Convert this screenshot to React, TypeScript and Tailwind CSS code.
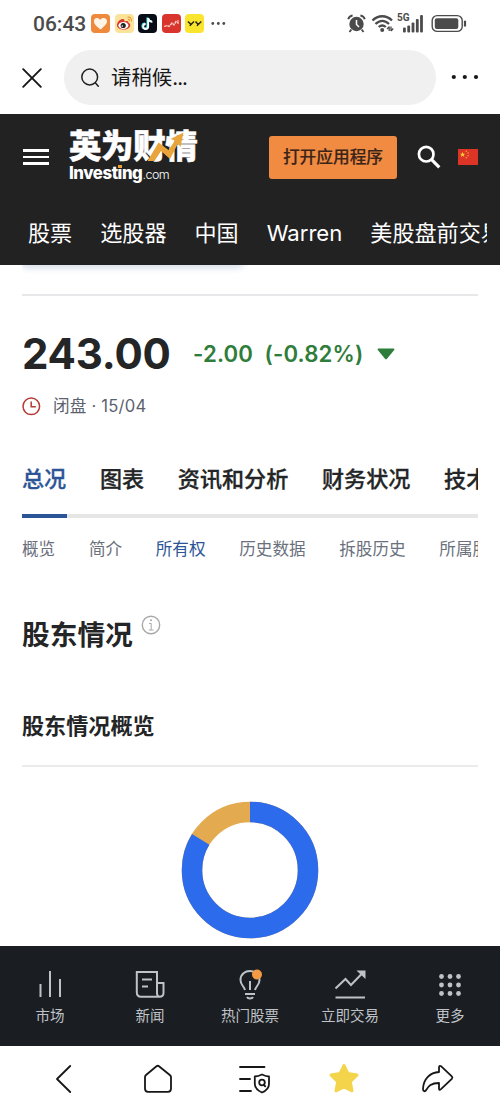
import React from 'react';

const NAV_ITEMS = ['股票', '选股器', '中国', 'Warren', '美股盘前交易'];
const TABS = ['总况', '图表', '资讯和分析', '财务状况', '技术分析'];
const SUB_TABS = ['概览', '简介', '所有权', '历史数据', '拆股历史', '所属股指'];

const StatusBar: React.FC = () => (
    <div className="flex h-[47px] shrink-0 items-center pl-[33px] pr-[32px] text-[#4b4b4b]">
        <span className="w-[58px] whitespace-nowrap pt-px font-['Roboto',sans-serif] text-[21px] font-medium leading-none">
            06:43
        </span>
        <div className="flex items-center gap-[4.6px]">
            {/* Heart */}
            <svg className="h-[19px] w-[19px]" viewBox="0 0 19 19">
                <rect width="19" height="19" rx="4" fill="#ef8a3d" />
                <path d="M9.5 15.5C5 12 2.8 9.8 3 7C3.2 3.5 7.5 3 9 6C11 2.8 15.8 3.5 16 7C16.1 10 13 12.5 9.5 15.5Z" fill="#fff4e8" />
            </svg>
            {/* Weibo */}
            <svg className="h-[19px] w-[19px]" viewBox="0 0 19 19">
                <rect width="19" height="19" rx="4" fill="#fbe49a" />
                <path d="M7.5 5C4 5.5 1.8 9 2 11.5C2.4 17 14.5 17 15.3 11.4C15.5 9.5 13.8 9 13.5 8.5C13.5 6.8 11.5 6.5 9.5 7.5C9.8 6 9 4.8 7.5 5Z" fill="#d7392f" />
                <ellipse cx="8.4" cy="11.5" rx="5" ry="3.5" fill="#fff" />
                <circle cx="8.2" cy="11.5" r="2.6" fill="#222" />
                <circle cx="7.3" cy="12" r=".8" fill="#fff" />
                <path d="M12.5 3.2C15.5 2.8 17 5 16.3 7.5M12.8 5.4C14.2 5.3 14.7 6 14.3 7.2" fill="none" stroke="#ee9a35" strokeWidth="1.1" />
            </svg>
            {/* Music note */}
            <svg className="h-[19px] w-[19px]" viewBox="0 0 19 19">
                <rect width="19" height="19" rx="4" fill="#080c16" />
                <path d="M9.4 3.5V12A2.5 2.5 0 1 1 7 9.4M9.5 4C10 6.2 11.5 7.4 13.8 7.5" fill="none" stroke="#36dce0" strokeWidth="2" />
                <path d="M10.2 4V12.5A2.5 2.5 0 1 1 7.7 10M10.3 4.4C10.8 6.6 12.2 7.8 14.4 7.9" fill="none" stroke="#fff" strokeWidth="1.8" />
            </svg>
            {/* Stock line */}
            <svg className="h-[19px] w-[19px]" viewBox="0 0 19 19">
                <rect width="19" height="19" rx="4" fill="#d8352e" />
                <path d="M2 12.5L5 11.5L7 12.5L10 9L12 11L14 7.5L16 9V6" fill="none" stroke="#ffd5ca" strokeWidth="1.3" strokeDasharray="3 .6" />
            </svg>
            <svg className="h-[19px] w-[19px]" viewBox="0 0 19 19">
                <rect width="19" height="19" rx="4" fill="#fae52e" />
                <path d="M3 7.5L6 10.5L9 7.5M6 10L5 12M10.5 7.5L13.2 10.5L16.3 7.5M13.2 10L12.2 12" fill="none" stroke="#282515" strokeWidth="1.5" />
            </svg>
            <svg className="ml-[2px] h-[5px] w-[15px]" viewBox="0 0 15 5" fill="currentColor">
                <circle cx="1.8" cy="2.5" r="1.4" />
                <circle cx="7.3" cy="2.5" r="1.4" />
                <circle cx="12.8" cy="2.5" r="1.4" />
            </svg>
        </div>
        <div className="ml-auto flex items-center">
            {/* Alarm clock */}
            <svg className="h-[19px] w-[19px]" viewBox="0 0 19 19">
                <circle cx="9.5" cy="10" r="7.2" fill="#4b4b4b" />
                <path d="M1.2 5.2C1.8 3 3.5 1.8 5.6 1.5M17.8 5.2C17.2 3 15.5 1.8 13.4 1.5M4.3 15.5L2.5 18M14.7 15.5L16.5 18" fill="none" stroke="#4b4b4b" strokeWidth="1.9" />
                <path d="M9.5 6V10.5L12 13" fill="none" stroke="#fff" strokeWidth="1.5" />
            </svg>
            {/* Wi-Fi */}
            <svg className="ml-[5px] h-[19px] w-[24px]" viewBox="0 0 24 19" fill="none" stroke="#4b4b4b" strokeWidth="2.3">
                <path d="M1.5 6.5C7 .8 15.5 .8 21 6.5M4.5 10C8.8 5.7 13.8 5.7 18 10M7.7 13C10 11 12.5 11 14.8 13" />
                <circle cx="11.2" cy="16" r="2" fill="#4b4b4b" stroke="none" />
                <path d="M18.2 12.5V17M16 15L18.2 12.8M20 17V12.5M22.2 14.5L20 17" strokeWidth="1.3" />
            </svg>
            {/* Signal */}
            <div className="relative ml-[2px] h-[19px] w-[27px]">
                <span className="absolute -top-px left-0 font-['Roboto',sans-serif] text-[10px] font-bold leading-none">5G</span>
                <svg className="h-[19px] w-[27px]" viewBox="0 0 27 19" fill="#4b4b4b">
                    <rect x="6" y="13.5" width="2.8" height="5" rx="1" />
                    <rect x="10.3" y="11.5" width="2.8" height="7" rx="1" />
                    <rect x="14.6" y="8.5" width="2.8" height="10" rx="1" />
                    <rect x="18.9" y="5" width="2.8" height="13.5" rx="1" />
                    <rect x="23.1" y="1" width="2.8" height="17.5" rx="1" />
                </svg>
            </div>
            <svg className="ml-[7px] h-[19px] w-[37px]" viewBox="0 0 37 19">
                <rect x="1.2" y="1.6" width="30" height="15.8" rx="5" fill="none" stroke="#4b4b4b" strokeWidth="1.4" />
                <rect x="3.8" y="4.2" width="23.5" height="10.8" rx="2" fill="#4b4b4b" />
                <path d="M34 6.7V12.5" stroke="#4b4b4b" strokeWidth="2.2" />
            </svg>
        </div>
    </div>
);

const AddressBar: React.FC = () => (
    <div className="flex h-[67px] shrink-0 items-start pl-[22px] pt-[3px]">
        <svg className="mt-[18px] h-[20px] w-[20px]" viewBox="0 0 20 20" fill="none" stroke="#171717" strokeWidth="1.9" strokeLinecap="round">
            <path d="M1.2 1.2L18.8 18.8M18.8 1.2L1.2 18.8" />
        </svg>
        <div className="ml-[22px] flex h-[55px] w-[372px] items-center rounded-full bg-[#f0f0f0] pl-[17px]">
            <svg className="h-[20px] w-[19px]" viewBox="0 0 19 20" fill="none" stroke="#202020" strokeWidth="1.5" strokeLinecap="round">
                <circle cx="8.7" cy="9" r="7.9" />
                <path d="M14.5 15L17.3 18.2" />
            </svg>
            <span className="ml-[11px] whitespace-nowrap pt-px text-[20.4px] leading-none text-[#171717]">
                请稍候<span className="tracking-[-0.9px]">...</span>
            </span>
        </div>
        <svg className="ml-[14px] mt-[24px] h-[6px] w-[30px]" viewBox="0 0 30 6" fill="#171717">
            <circle cx="3.8" cy="3" r="2.1" />
            <circle cx="14.8" cy="3" r="2.1" />
            <circle cx="26" cy="3" r="2.1" />
        </svg>
    </div>
);

const BrandLogo: React.FC = () => (
    <div className="relative ml-[20px] h-[56px] w-[131px] whitespace-nowrap text-white">
        <div className="mt-[2px] h-[32px] text-[32.5px] font-black leading-[32px] tracking-[-0.4px] [-webkit-text-stroke:0.5px_white]">
            英为财情
        </div>
        {/* Rising arrow laid over the wordmark */}
        <svg className="absolute left-0 top-0 h-[36px] w-[131px]" viewBox="0 0 131 36">
            <path d="M78.5 32L89.5 13.5L99.5 21L106 11.5L101.5 10L114.5 3.5L111.5 18L109 14.5L101 30L92 22L85.5 32Z" fill="#e9a43b" />
        </svg>
        <div className="mt-px flex items-baseline font-['Inter',sans-serif] leading-[18px]">
            <span className="text-[16.8px] font-extrabold tracking-[-0.45px]">Investing</span>
            <span className="text-[12.5px] font-light tracking-[-0.5px]">.com</span>
        </div>
        <span className="absolute left-[49px] top-[36px] h-[3px] w-[4px] bg-[#e9a43b]" />
    </div>
);

const SiteHeader: React.FC = () => (
    <header className="h-[151px] shrink-0 bg-[#222222]">
        <div className="flex h-[86px] items-center pl-[23px]">
            <div className="flex w-[26px] flex-col gap-[4px]">
                <span className="h-[2.5px] bg-white" />
                <span className="h-[2.5px] bg-white" />
                <span className="h-[2.5px] bg-white" />
            </div>
            <BrandLogo />
            <button className="ml-[69px] h-[43px] w-[128px] whitespace-nowrap rounded-[3px] bg-[#f28b42] pt-px text-[16.7px] font-medium leading-none text-[#3b2519] [-webkit-text-stroke:0.2px_#3b2519]">
                打开应用程序
            </button>
            <svg className="ml-[20px] h-[24px] w-[24px]" viewBox="0 0 24 24" fill="none" stroke="#fff" strokeWidth="2.7">
                <circle cx="9.2" cy="9.2" r="7.3" />
                <path d="M14.4 14.4L22.3 22.3" strokeWidth="3.2" />
            </svg>
            <svg className="ml-[17px] h-[16px] w-[20px]" viewBox="0 0 20 16">
                <rect width="20" height="16" fill="#dc3426" />
                <path d="M4.6 2.7L5.3 4.7H7.3L5.7 6L6.3 8L4.6 6.8L2.9 8L3.5 6L1.9 4.7H3.9Z" fill="#f7cf36" />
                <g fill="#f2b832">
                    <circle cx="8.2" cy="2.2" r=".7" />
                    <circle cx="10" cy="4" r=".7" />
                    <circle cx="10" cy="6.8" r=".7" />
                    <circle cx="8.2" cy="8.8" r=".7" />
                </g>
            </svg>
        </div>
        <nav className="ml-[28px] mr-[13px] flex h-[65px] items-start gap-[28px] overflow-hidden pt-[17px] text-[22.1px] leading-[32px] text-white">
            {NAV_ITEMS.map((item) => (
                <span key={item} className="shrink-0 whitespace-nowrap">{item}</span>
            ))}
        </nav>
    </header>
);

const Quote: React.FC = () => (
    <section className="h-[158px] border-t-2 border-[#e8e8ea]">
        <div className="flex h-[116px] items-center whitespace-nowrap">
            <span className="w-[171px] text-[42px] font-bold leading-none tracking-[-0.2px] text-[#232526]">243.00</span>
            <span className="w-[71.5px] text-[22.2px] font-semibold leading-none tracking-[0.15px] text-[#2f7d3b]">-2.00</span>
            <span className="text-[22.2px] font-semibold leading-none tracking-[0.15px] text-[#2f7d3b]">(-0.82%)</span>
            <svg className="ml-[14px] h-[12px] w-[18px]" viewBox="0 0 18 12" fill="#2f7d3b">
                <path d="M1.3 .5H16.7Q18 .8 17.2 2L10 10.7Q9 11.8 8 10.7L.8 2Q0 .8 1.3 .5Z" />
            </svg>
        </div>
        <div className="-mt-[16px] flex h-[20px] items-center">
            <svg className="h-[19px] w-[19px]" viewBox="0 0 19 19" fill="none" stroke="#b63a35" strokeWidth="1.5">
                <circle cx="9.3" cy="9.3" r="8.3" />
                <path d="M9.2 4.5V9.8H13.8" />
            </svg>
            <span className="ml-[12px] whitespace-nowrap text-[16.6px] leading-none tracking-[0.2px] text-[#5b616e]">闭盘 · 15/04</span>
        </div>
    </section>
);

const Tabs: React.FC = () => (
    <>
        <div className="flex h-[66px] gap-[33.7px] overflow-hidden border-b-4 border-[#e6e6e6] text-[22.1px] font-medium leading-[32px] text-[#232526]">
            {TABS.map((tab, i) => (
                <span key={tab} className={`shrink-0 whitespace-nowrap pt-[11px] [-webkit-text-stroke:0.3px] ${i === 0 ? 'text-[#2b5597]' : ''}`}>
                    {tab}
                </span>
            ))}
        </div>
        <div className="-mt-[4px] h-[4px] w-[45px] shrink-0 bg-[#2b5597]" />
        <div className="flex h-[61px] items-center gap-[33.7px] overflow-hidden text-[16.6px] leading-[26px] text-[#6a707c]">
            {SUB_TABS.map((tab, i) => (
                <span key={tab} className={`shrink-0 whitespace-nowrap ${i === 2 ? 'text-[#2b5597]' : ''}`}>
                    {tab}
                </span>
            ))}
        </div>
    </>
);

const OwnershipChart: React.FC = () => {
    const circumference = 2 * Math.PI * 58;
    const blue = circumference * 0.837;
    return (
        <div className="flex justify-center pt-[33px]">
            <svg className="h-[140px] w-[140px]" viewBox="0 0 140 140">
                <g transform="rotate(-90 70 70)" fill="none" strokeWidth="20.5">
                    <circle cx="70" cy="70" r="58" stroke="#e4aa50" />
                    <circle cx="70" cy="70" r="58" stroke="#2d6bed" strokeDasharray={`${blue} ${circumference}`} />
                </g>
            </svg>
        </div>
    );
};

const navIcons = [
    {
        label: '市场',
        icon: <path d="M5.5 16V29M15 3V29M25 11V29" />,
    },
    {
        label: '新闻',
        icon: (
            <>
                <path d="M22 26V4H1.8V24Q1.8 28.8 6 28.8H24.5Q28.5 28.8 28.5 25V15H22V25Q22 28.8 25 28.8" />
                <path d="M7 11.5H17M7 18.5H13" />
            </>
        ),
    },
    {
        label: '热门股票',
        icon: (
            <>
                <path d="M10 22C9 18 5.5 17 5.5 12C5.5 0 24.5 0 24.5 12C24.5 17 21 18 20 22M15 13V22M10 26H20M12 29C13 31 17 31 18 29" />
                <circle cx="22" cy="6.5" r="5" fill="#f39a45" stroke="none" />
            </>
        ),
    },
    {
        label: '立即交易',
        icon: (
            <>
                <path d="M.5 20.5L10.5 11L16 17L27.5 5M.5 29.5H30" />
                <path d="M21.5 2.5H30.5V11Z" fill="#bfc2c7" stroke="none" />
            </>
        ),
    },
    {
        label: '更多',
        icon: (
            <g fill="#bfc2c7" stroke="none">
                {[8.5, 17, 25.5].map((y) =>
                    [6.5, 15, 23.5].map((x) => <circle key={`${x}-${y}`} cx={x} cy={y} r="2.4" />)
                )}
            </g>
        ),
    },
];

const BottomNav: React.FC = () => (
    <nav className="grid h-[100px] shrink-0 grid-cols-5 bg-[#1a1d21] pt-[22px]">
        {navIcons.map(({ label, icon }) => (
            <div key={label} className="flex flex-col items-center">
                <svg className="h-[32px] w-[31px]" viewBox="0 0 31 32" fill="none" stroke="#bfc2c7" strokeWidth="2">
                    {icon}
                </svg>
                <span className="mt-[5px] whitespace-nowrap text-[14.5px] leading-[22px] text-[#bfc2c7]">{label}</span>
            </div>
        ))}
    </nav>
);

const BrowserBar: React.FC = () => (
    <div className="flex h-[65px] shrink-0 items-center pl-[54px]">
        <svg className="h-[32px] w-[20px]" viewBox="0 0 20 32" fill="none" stroke="#171717" strokeWidth="1.8" strokeLinecap="round" strokeLinejoin="round">
            <path d="M16.2 3L3 16L16.2 29" />
        </svg>
        <svg className="ml-[68px] h-[32px] w-[32px]" viewBox="0 0 32 32" fill="none" stroke="#171717" strokeWidth="1.8" strokeLinejoin="round">
            <path d="M3 14Q3 13 4 12L14.5 3.2Q15.8 2.2 17 3.2L27.8 12Q29 13 29 14V25.5Q29 28.8 26 28.8H6Q3 28.8 3 25.5Z" />
        </svg>
        <svg className="ml-[64px] h-[32px] w-[34px]" viewBox="0 0 34 32" fill="none" stroke="#171717" strokeWidth="1.8" strokeLinecap="round" strokeLinejoin="round">
            <path d="M2 4H26.5M2 16H12M2 28H13M24 11.5Q28 13.5 31 13.5V21Q31 26.5 24 29.5Q17 26.5 16.8 21V13.5Q20 13.5 24 11.5Z" />
            <circle cx="24" cy="19.5" r="2.8" />
            <path d="M25.8 21.6L27.2 23.4" />
        </svg>
        <svg className="ml-[56px] h-[32px] w-[32px]" viewBox="0 0 32 32">
            <path d="M16 2.5L19.8 10.5L29 12L22.3 18.7L24 27.8L16 24L8 27.8L9.7 18.7L3 12L12.2 10.5Z" fill="#f3d44a" stroke="#f3d44a" strokeWidth="3" strokeLinejoin="round" />
        </svg>
        <svg className="ml-[61px] h-[32px] w-[34px]" viewBox="0 0 34 32" fill="none" stroke="#171717" strokeWidth="1.8" strokeLinejoin="round">
            <path d="M18 9V4.5Q18.2 2 20 3.2L30.8 13.3Q32 14.5 30.8 15.8L20 26.2Q18 28 18 25.5V20C10 20 7.5 23 5.2 27C4 29 2 28.5 2 26C2.5 16 9 9.5 18 9Z" />
        </svg>
    </div>
);

export default function App() {
    return (
        <div className="flex h-[1111px] w-[500px] flex-col overflow-hidden bg-white font-['Inter','Noto_Sans_CJK_SC',sans-serif]">
            <StatusBar />
            <AddressBar />
            <SiteHeader />
            <main className="h-[681px] shrink-0 overflow-hidden px-[22px]">
                <div className="h-[29px] overflow-hidden">
                    <div className="-mt-[8px] h-[8px] w-[220px] rounded-b shadow-[0_1px_7px_2px_#d5deeb]" />
                </div>
                <Quote />
                <Tabs />
                <div className="mt-[36px] flex h-[40px] items-start">
                    <h1 className="whitespace-nowrap text-[27.7px] font-bold leading-[40px] text-[#232526]">股东情况</h1>
                    <svg className="ml-[8px] h-[20px] w-[20px]" viewBox="0 0 20 20" fill="none" stroke="#a8a8a8" strokeWidth="1.4">
                        <circle cx="10" cy="10" r="8.7" />
                        <path d="M8 8.5H10.2V15M7.8 15H12.5" strokeWidth="1" />
                        <circle cx="10" cy="5.2" r="1" fill="#a8a8a8" stroke="none" />
                    </svg>
                </div>
                <h2 className="mt-[55px] h-[57px] whitespace-nowrap border-b-2 border-[#ebebeb] text-[22.1px] font-bold leading-[32px] text-[#232526]">
                    股东情况概览
                </h2>
                <OwnershipChart />
            </main>
            <BottomNav />
            <BrowserBar />
        </div>
    );
}
